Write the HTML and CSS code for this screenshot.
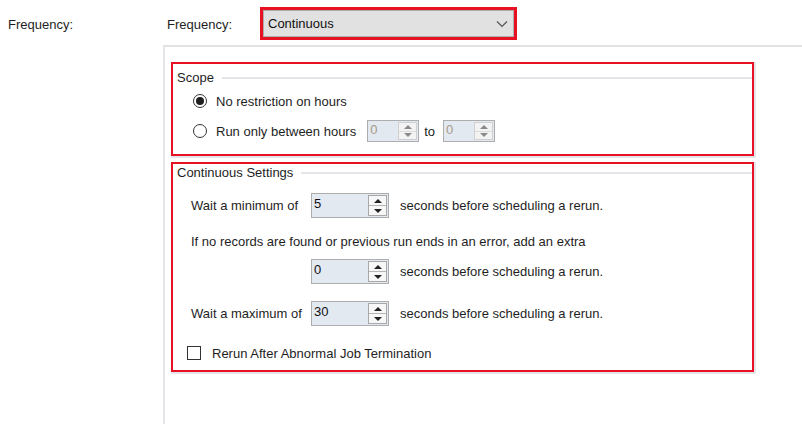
FILE: index.html
```html
<!DOCTYPE html>
<html>
<head>
<meta charset="utf-8">
<link rel="stylesheet" href="styles.css">
</head>
<body>
<div class="page">
  <div class="left-col">
    <div class="side-label">Frequency:</div>
  </div>
  <div class="right-col">
    <div class="top-row">
      <div class="freq-label">Frequency:</div>
      <div class="red-sel">
        <div class="dropdown">
          <span>Continuous</span>
          <svg class="chev" width="12" height="8" viewBox="0 0 12 8"><polyline points="1,1.5 6,6.5 11,1.5" fill="none" stroke="#555" stroke-width="1.2"/></svg>
        </div>
      </div>
    </div>
    <div class="panel">
      <div class="group scope">
        <div class="g-head"><span>Scope</span><div class="g-line"></div></div>
        <div class="radio-row r1">
          <span class="radio on"></span><span>No restriction on hours</span>
        </div>
        <div class="radio-row r2">
          <span class="radio"></span><span class="run-txt">Run only between hours</span>
          <div class="spin small disabled"><div class="sv">0</div><div class="sb"><span class="up"></span><span class="dn"></span></div></div>
          <span class="to">to</span>
          <div class="spin small disabled"><div class="sv">0</div><div class="sb"><span class="up"></span><span class="dn"></span></div></div>
        </div>
      </div>
      <div class="group cont">
        <div class="g-head"><span>Continuous Settings</span><div class="g-line"></div></div>
        <div class="srow s1">
          <span class="lbl">Wait a minimum of</span>
          <div class="spin"><div class="sv">5</div><div class="sb"><span class="up"></span><span class="dn"></span></div></div>
          <span class="after">seconds before scheduling a rerun.</span>
        </div>
        <div class="note">If no records are found or previous run ends in an error, add an extra</div>
        <div class="srow s2">
          <span class="lbl"></span>
          <div class="spin"><div class="sv">0</div><div class="sb"><span class="up"></span><span class="dn"></span></div></div>
          <span class="after">seconds before scheduling a rerun.</span>
        </div>
        <div class="srow s3">
          <span class="lbl">Wait a maximum of</span>
          <div class="spin"><div class="sv">30</div><div class="sb"><span class="up"></span><span class="dn"></span></div></div>
          <span class="after">seconds before scheduling a rerun.</span>
        </div>
        <div class="check-row">
          <span class="check"></span><span>Rerun After Abnormal Job Termination</span>
        </div>
      </div>
    </div>
  </div>
</div>
</body>
</html>
```

FILE: styles.css
```css
html, body {
  margin: 0;
  padding: 0;
  background: #ffffff;
}
body {
  font-family: "Liberation Sans", Arial, sans-serif;
  font-size: 13px;
  color: #1e1e1e;
  width: 802px;
  height: 424px;
  overflow: hidden;
}
.page {
  display: grid;
  grid-template-columns: 163px 1fr;
  height: 424px;
}
.left-col {
  padding-top: 17px;
  padding-left: 8px;
}
.side-label {
  line-height: 16px;
}
.right-col {
  display: flex;
  flex-direction: column;
}
.top-row {
  height: 45px;
  display: flex;
  align-items: flex-start;
}
.freq-label {
  width: 97px;
  padding-left: 4px;
  box-sizing: border-box;
  margin-top: 17px;
  line-height: 16px;
}
.red-sel {
  margin-top: 7px;
  width: 257px;
  height: 33px;
  box-sizing: border-box;
  border: 3px solid #e81123;
  display: flex;
}
.dropdown {
  flex: 1;
  background: #e1e1e1;
  border: 1px solid #adadad;
  display: flex;
  align-items: center;
  justify-content: space-between;
  padding-left: 4px;
  padding-right: 5px;
  color: #111;
}
.chev {
  display: block;
}
.panel {
  flex: 1;
  border-top: 2px solid #e3e3e3;
  border-left: 2px solid #e3e5e8;
  padding-left: 6px;
  padding-top: 15px;
}
.group {
  width: 583px;
  box-sizing: border-box;
  border: 2px solid #e81123;
  box-shadow: 1px 1px 0 1px #e3e5e8;
}
.g-head {
  display: flex;
  align-items: center;
  height: 16px;
  line-height: 16px;
  padding-left: 4px;
}
.g-line {
  flex: 1;
  height: 2px;
  background: #e3e5e8;
  margin-left: 8px;
}
.scope {
  height: 94px;
  padding-top: 6px;
}
.radio-row {
  display: flex;
  align-items: center;
  padding-left: 20px;
}
.r1 {
  height: 20px;
  margin-top: 5px;
}
.r2 {
  height: 22px;
  margin-top: 9px;
}
.radio {
  width: 14px;
  height: 14px;
  box-sizing: border-box;
  border: 1px solid #333;
  border-radius: 50%;
  background: #fff;
  margin-right: 9px;
  display: flex;
  align-items: center;
  justify-content: center;
}
.radio.on::after {
  content: "";
  width: 8px;
  height: 8px;
  border-radius: 50%;
  background: #1e1e1e;
}
.run-txt {
  margin-right: 11px;
}
.to {
  margin: 0 8px 0 5px;
}
.spin {
  width: 78px;
  height: 25px;
  box-sizing: border-box;
  border: 1px solid #adadad;
  background: #e3e9f1;
  display: flex;
}
.spin.small {
  width: 52px;
  height: 22px;
}
.sv {
  flex: 1;
  padding-left: 2px;
  line-height: 20px;
  color: #111;
}
.spin.small .sv {
  line-height: 18px;
  color: #a79a86;
}
.sb {
  width: 17px;
  margin: 1px 1px 1px 0;
  background: #f7f7f7;
  border: 1px solid #a8a8a8;
  display: flex;
  flex-direction: column;
}
.spin.small .sb {
  border-color: #d0d0d0;
  background: #f3f3f3;
}
.sb .up, .sb .dn {
  flex: 1;
  display: flex;
  align-items: center;
  justify-content: center;
}
.sb .up {
  border-bottom: 1px solid #b5b5b5;
}
.spin.small .sb .up {
  border-bottom-color: #dcdcdc;
}
.sb .up::after {
  content: "";
  border-left: 4px solid transparent;
  border-right: 4px solid transparent;
  border-bottom: 4px solid #222;
}
.sb .dn::after {
  content: "";
  border-left: 4px solid transparent;
  border-right: 4px solid transparent;
  border-top: 4px solid #222;
}
.spin.small .sb .up::after {
  border-bottom-color: #8a8a8a;
}
.spin.small .sb .dn::after {
  border-top-color: #8a8a8a;
}
.cont {
  margin-top: 6px;
  height: 210px;
  padding-top: 1px;
}
.srow {
  display: flex;
  align-items: center;
  padding-left: 18px;
}
.lbl {
  width: 120px;
}
.after {
  margin-left: 11px;
}
.s1 {
  margin-top: 12px;
}
.note {
  padding-left: 18px;
  line-height: 16px;
  margin-top: 16px;
}
.s2 {
  margin-top: 9px;
}
.s3 {
  margin-top: 17px;
}
.check-row {
  display: flex;
  align-items: center;
  padding-left: 14px;
  height: 16px;
  margin-top: 19px;
}
.check {
  width: 14px;
  height: 14px;
  box-sizing: border-box;
  border: 1px solid #333;
  background: #fff;
  margin-right: 11px;
}
```
